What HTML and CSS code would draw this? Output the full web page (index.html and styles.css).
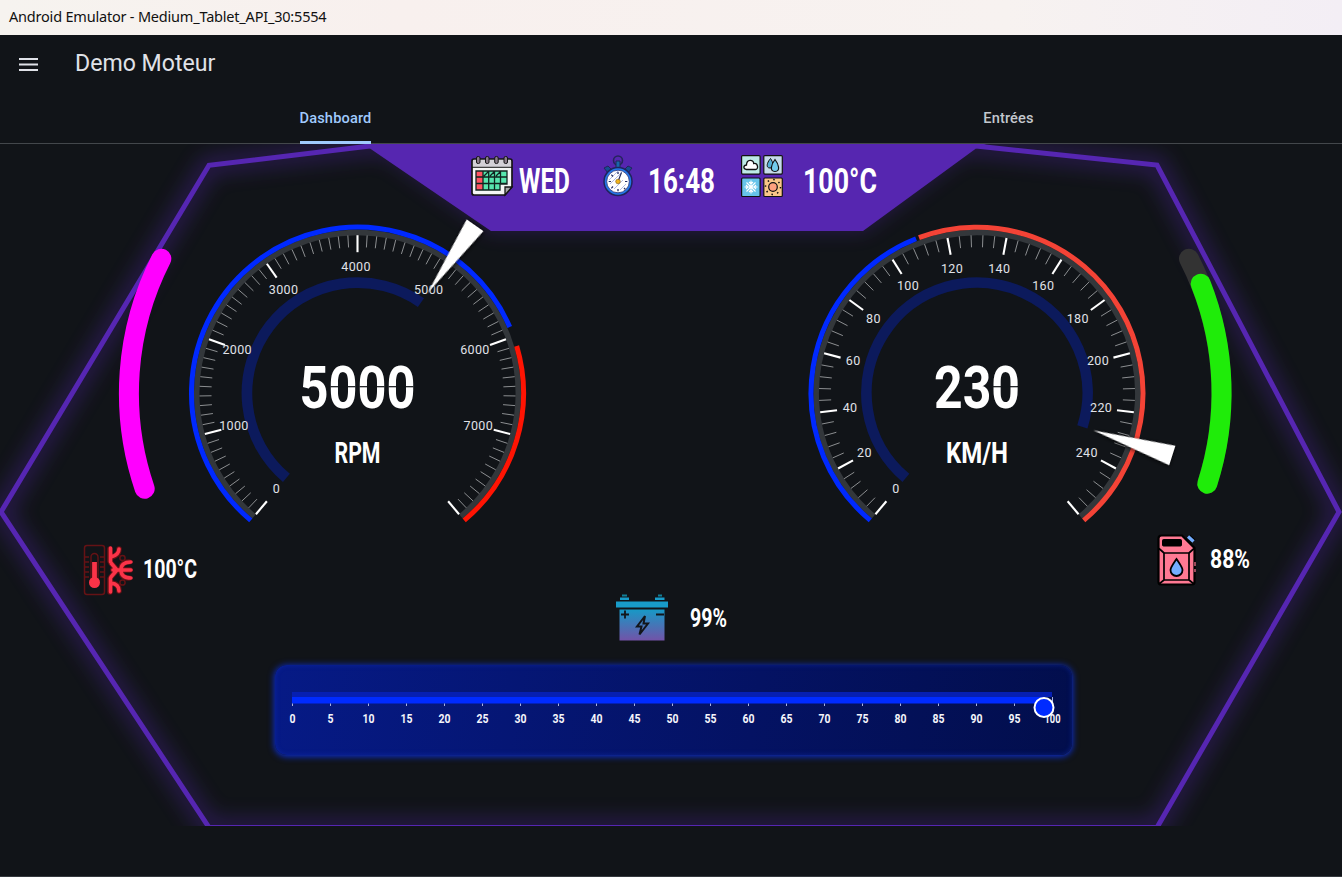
FILE: index.html
```html
<!DOCTYPE html>
<html lang="fr">
<head>
<meta charset="utf-8">
<title>Demo Moteur</title>
<link rel="stylesheet" href="styles.css">
</head>
<body>
<header class="titlebar"><span>Android Emulator - Medium_Tablet_API_30:5554</span></header>
<div class="appbar">
  <svg class="menu" width="19" height="14" viewBox="0 0 19 14"><path d="M0 1h19M0 6.500h19M0 12h19"/></svg>
  <h1>Demo Moteur</h1>
</div>
<nav class="tabs">
  <div class="tab active"><span>Dashboard</span></div>
  <div class="tab entries"><span>Entrées</span></div>
</nav>
<main class="dash">
  <svg class="frame" width="1342" height="682" viewBox="0 144 1342 682">
    <defs><filter id="glow" x="-10%" y="-10%" width="120%" height="120%"><feGaussianBlur stdDeviation="10"/></filter></defs>
    <g filter="url(#glow)" opacity=".34">
      <path class="outline wide" d="M209 165L370 146.500H975L1157 165L1339 512L1157 827.500H209L1 512Z"/>
      <path class="banner" d="M368 144H980L863 231H491Z"/>
    </g>
    <path class="outline" d="M370 146L209 165.300L1 512L209 827.500H1157L1339 512L1157 165L976 146"/>
    <path class="banner" d="M364 144H986L976 148.500L863 231H491L368.500 147.500Z"/>
  </svg>

  <section class="readouts">
    <div class="readout date">
      <svg width="42" height="40" viewBox="0 0 42 40">
        <path d="M1 5Q1 3 3 3H39Q41 3 41 5V31L34 39H3Q1 39 1 37Z" fill="#f5f5f5" stroke="#151515" stroke-width="1.700"/>
        <path d="M2 4H40V11H2Z" fill="#d3d0d6"/><path d="M1 11.300H41" stroke="#151515" stroke-width="1"/>
        <path d="M5 15H36V28H29V34H5Z" fill="#57e6ae"/><path d="M5 15H12V34H5Z" fill="#ff5362"/>
        <path d="M5 15H36V28H29V34H5ZM12 15V34M17.700 15V34M23.500 15V34M29.500 15V28M5 21H36M5 27.500H36M13 20l4-4M19 20l4-4M25 20l4-4" fill="none" stroke="#10241f" stroke-width="1.300"/>
        <path d="M34 39V31H41Z" fill="#aaa" stroke="#151515" stroke-width="1.300"/>
        <g fill="#8b7d89" stroke="#151515" stroke-width="1"><rect x="5.500" y=".5" width="3.500" height="7" rx="1.500"/><rect x="14.500" y=".5" width="3.500" height="7" rx="1.500"/><rect x="23.700" y=".5" width="3.500" height="7" rx="1.500"/><rect x="33" y=".5" width="3.500" height="7" rx="1.500"/></g>
      </svg>
      <svg class="digits" width="51" height="26"><text x="0" y="25.300" textLength="51">WED</text></svg>
    </div>
    <div class="readout clock">
      <svg width="30" height="42" viewBox="0 0 30 42">
        <circle cx="15" cy="5.500" r="4.500" fill="none" stroke="#25245c" stroke-width="1.600"/>
        <path d="M13 6h4v7h-4Z" fill="#1867ab" stroke="#202657"/>
        <path d="M1 13l4-2 4 4-4 3ZM29 13l-4-2-4 4 4 3Z" fill="#164c91" stroke="#24245c"/>
        <circle cx="15" cy="26.500" r="14" fill="#2377e8" stroke="#20245d" stroke-width="1.500"/>
        <circle cx="15" cy="26.500" r="11.300" fill="#fff" stroke="#2a347a" stroke-width=".8"/>
        <path d="M6 25l9-9M7 29L19 17M11 34l9-9M17 35l6-6M15 16v3M15 34v3M5 26.500h3M22 26.500h3M8 19l2 2M8 34l2-2M21 33l2 2" stroke="#a6b3e2" stroke-width=".9"/>
        <path d="M15 17v2M15 34v2M6 26.500h2M22 26.500h2M8.500 20l1.500 1.500M21 33l1.500 1.500M8.500 33l1.500-1.500M15 26.500L18.500 17.500" stroke="#28305e" stroke-width="1.200"/>
        <circle cx="15" cy="26.500" r="2.300" fill="#efb41e" stroke="#815b10" stroke-width=".6"/>
      </svg>
      <svg class="digits" width="66" height="26"><text x="-1" y="25.300" textLength="67">16:48</text></svg>
    </div>
    <div class="readout weather">
      <svg width="42" height="42" viewBox="0 0 42 42">
        <g stroke="#111" stroke-width="1.200"><rect x=".6" y=".6" width="18.500" height="18.500" rx="1" fill="#bdebe6"/><rect x="22.800" y=".6" width="18.500" height="18.500" rx="1" fill="#c6dbea"/><rect x=".6" y="23" width="18.500" height="18.500" rx="1" fill="#67c4ea"/><rect x="22.800" y="23" width="18.500" height="18.500" rx="1" fill="#fac789"/></g>
        <path d="M5.500 14.500C2 14.500 2 10.300 5.500 10C5.500 4 12.500 4 12.700 8.500C17.500 8 17.500 14.500 14.500 14.500Z" fill="#fff" stroke="#111" stroke-width="1.300"/>
        <path d="M29.500 3.500C26 7.500 24.500 13 29 13C34 13 32 7 29.500 3.500Z" fill="#54afd7" stroke="#111"/><path d="M34 4.500C30.500 9 28 16.500 34 16.500C40 16.500 37.500 9 34 4.500Z" fill="#72cbed" stroke="#111" stroke-width="1.200"/>
        <path d="M10 25.500v13M3.500 32h13M5.500 27.500l9 9M14.500 27.500l-9 9M8 27l2 2 2-2M8 37l2-2 2 2M5 30l2 2-2 2M15 30l-2 2 2 2" fill="none" stroke="#fff" stroke-width="1.100"/>
        <circle cx="32" cy="32" r="4.300" fill="#ffa17f" stroke="#111" stroke-width="1.200"/><circle cx="32" cy="32" r="7.500" fill="none" stroke="#111" stroke-width="1.500" stroke-dasharray="1.500 4.390"/>
      </svg>
      <svg class="digits" width="73" height="26"><text x="-2" y="25.300" textLength="74">100°C</text></svg>
    </div>
  </section>

  <section class="gauges">
    <svg class="level temp" width="189" height="314" viewBox="0 216 189 314"><path d="M161.300 258.700A296 296 0 0 0 144.700 488.700"/></svg>
    <svg class="gauge" id="rpm" width="337" height="314" viewBox="-168.500 -177.200 337 314"></svg>
    <div></div>
    <svg class="gauge" id="speed" width="337" height="314" viewBox="-168 -177.200 337 314"></svg>
    <svg class="level fuel" width="196" height="314" viewBox="1146 216 196 314"><path class="rest" d="M1189 258.700A296 296 0 0 1 1207.300 483.700"/><path d="M1200.700 283.700A296 296 0 0 1 1207.300 483.700"/></svg>
  </section>

  <section class="status">
    <div class="item thermo">
      <svg width="51" height="52" viewBox="0 0 51 52">
        <rect x="1.500" y="1.500" width="20" height="49" rx="2.500" fill="none" stroke="#651215" stroke-width="1.500"/>
        <path d="M8 36V13a3.500 3.500 0 0 1 7 0V36M2 13h4M2 18h4M2 23h4M2 28h4M2 33h4M17 13h4M17 18h4M17 23h4M17 28h4M17 33h4" fill="none" stroke="#651215" stroke-width="1.400"/>
        <path d="M11.500 18V38" stroke="#fb3348" stroke-width="4.800"/><circle cx="11.500" cy="38.500" r="5.500" fill="#fb3348"/>
        <g fill="none" stroke="#651215" stroke-width="5.500" stroke-linecap="round"><path d="M27 5V17M27 35V48M30 26h17M36 5q0 6-7 8M36 47q0-7-7-8M46 18q-8 0-8 8M46 34q-8 0-8-8M28 19l6 7-6 7"/></g>
        <g fill="none" stroke="#fb3348" stroke-width="3.600" stroke-linecap="round"><path d="M27.500 4V18M27.500 34V48M30 26h18M36 5q0 6-8 8M36 47q0-7-8-8M48 18q-10 0-10 8M48 34q-10 0-10-8M28 19l6 7-6 7"/></g>
        <g fill="none" stroke="#651215" stroke-width="1.500"><circle cx="39.500" cy="14" r="2.600"/><circle cx="39.500" cy="38.500" r="2.600"/></g>
      </svg>
      <svg class="digits small" width="54" height="20"><text x="-2" y="18.800" textLength="54">100°C</text></svg>
    </div>
    <div class="item battery">
      <svg width="52" height="48" viewBox="0 0 52 48">
        <defs><linearGradient id="bat" x1="0" y1="0" x2="0" y2="1"><stop offset="0" stop-color="#1799c6"/><stop offset="1" stop-color="#7253a8"/></linearGradient></defs>
        <path d="M6 .5h5v2H6ZM42 .5h4v2h-4Z" fill="#117f98"/><path d="M4 3.500h9v2.500H4ZM39 3.500h9.500v2.500H39ZM0 7.500h52v6H0Z" fill="#189cc9"/>
        <path d="M3.500 15.500h45V46.500h-45Z" fill="url(#bat)"/>
        <path d="M5 20.500h8M9 16.500v8M40 20.500h8" stroke="#12151a" stroke-width="1.800"/>
        <path d="M29 22L21 32.500H25.500L23.500 40.500L32 29.500H27.500Z" fill="none" stroke="#12151a" stroke-width="2"/>
      </svg>
      <svg class="digits small" width="38" height="20"><text x="0" y="18.500" textLength="37">99%</text></svg>
    </div>
    <div class="item can">
      <svg width="40" height="52" viewBox="0 0 40 52">
        <path d="M1.500 4.500Q1.500 1.500 4.500 1.500H25L37.500 14V48Q37.500 50.500 35 50.500H4Q1.500 50.500 1.500 48Z" fill="#ff7993" stroke="#000" stroke-width="2.200"/>
        <path d="M7 19H32V46H7ZM2 14.500L7 19M37 14.500L32 19M2 50l5-4M32 46l5 4" fill="none" stroke="#000" stroke-width="1.700"/>
        <rect x="5.500" y="5.500" width="19" height="6.500" rx="1" stroke="#000"/><path d="M38 28v4M38 35v3" stroke="#ff7993" stroke-width="1.200"/>
        <path d="M31 2.500l5.500 5" stroke="#000" stroke-width="5.500"/><path d="M31 2.500l5.500 5" stroke="#73adff" stroke-width="3.300"/>
        <path d="M19.500 25C15.500 31 13.500 33.500 13.500 36a6 6 0 0 0 12 0C25.500 33.500 23.500 31 19.500 25Z" fill="#73adff" stroke="#000" stroke-width="1.800"/>
      </svg>
      <svg class="digits small" width="40" height="20"><text x="-1" y="19.200" textLength="40">88%</text></svg>
    </div>
  </section>

  <section class="panel"><svg id="scale" width="797" height="90" viewBox="275 665 797 90"></svg></section>
</main>
<footer class="edge"></footer>
<script src="gauges.js"></script>
</body>
</html>
```
FILE: styles.css
```css
* { box-sizing: border-box; }
body { margin: 0; width: 1342px; height: 877px; overflow: hidden; display: flex; flex-direction: column; background: #111418; font-family: Roboto, sans-serif; }
svg { display: block; overflow: visible; flex: none; }
.titlebar { height: 35px; flex: none; padding: 0 9px 3px; display: flex; align-items: center; background: linear-gradient(90deg, #f6f3ef, #f8f0ee 30%, #f7f2f0 75%, #f3eef5); color: #111; font: 14.5px/32px "Noto Sans", sans-serif; white-space: nowrap; }
.titlebar span { letter-spacing: -.2px; }
.appbar { height: 58px; flex: none; display: flex; align-items: center; padding-left: 19px; gap: 37px; }
.menu { stroke: #e0e2e8; stroke-width: 2; margin-top: 1px; }
h1 { margin: 0; font-size: 23.1px; font-weight: 400; color: #e0e2e8; line-height: 58px; }
.tabs { height: 51px; flex: none; display: grid; grid-template-columns: 1fr 1fr; border-bottom: 1px solid #43474b; }
.tab { display: flex; justify-content: center; color: #c3c7cd; font-size: 14.6px; font-weight: 500; line-height: 50px; letter-spacing: .15px; }
.active { color: #a0cafd; }
.active span { height: 51px; background: linear-gradient(#a0cafd, #a0cafd) bottom / 100% 3px no-repeat; }
.entries { padding-left: 4px; }
.dash { height: 682px; flex: none; position: relative; overflow: hidden; }
.frame { position: absolute; inset: 0; z-index: -1; }
.outline { fill: none; stroke: #5626b2; stroke-width: 5; }
.wide { stroke-width: 18; }
.banner { fill: #5626b0; }
.readouts { height: 72px; display: flex; padding: 11px 0 0 471px; }
.readout { display: flex; align-items: flex-start; }
.date { gap: 6px; padding-top: 1px; }
.clock .digits, .weather .digits { margin-top: 13px; }
.date .digits { margin-top: 12px; }
.clock { margin-left: 33px; gap: 16px; }
.weather { margin-left: 26px; gap: 22px; }
.digits text { font: 700 35.5px Roboto, sans-serif; fill: #fff; }
.digits.small text { font-size: 26px; }
.gauges { height: 314px; display: grid; grid-template-columns: 189px 337px 283px 337px 196px; }
.level path { fill: none; stroke-width: 20; stroke-linecap: round; }
.temp path { stroke: #ff00ff; }
.fuel path { stroke: #1fec09; }
.fuel .rest { stroke: #333; }
.band { fill: none; stroke-width: 5; }
.track { fill: none; stroke: #33373b; stroke-width: 5.5; }
.inner { fill: none; stroke: #0c1a5c; stroke-width: 10.7; }
.major { stroke: #fff; stroke-width: 2.1; }
.minor { stroke: #9a9c9e; stroke-width: .9; }
.mark { font: 12.5px Roboto, sans-serif; letter-spacing: .35px; fill: #e0e2e8; text-anchor: middle; }
.value { font: 700 59px Roboto, sans-serif; fill: #fff; }
.unit { font: 700 30px Roboto, sans-serif; fill: #fff; }
.notch { stroke: #111418; stroke-width: 1.2; }
.needle { fill: #fff; filter: drop-shadow(0 1px 2px rgba(0, 0, 0, .8)); }
.status { height: 120px; display: grid; grid-template-columns: 616px 541px 185px; }
.item { display: flex; align-items: flex-start; }
.thermo { padding: 14px 0 0 83px; gap: 11px; }
.thermo .digits { margin-top: 15px; }
.battery { padding-top: 64px; gap: 22px; }
.battery .digits { margin-top: 14px; }
.can { padding-top: 4px; gap: 14px; }
.can .digits { margin-top: 15px; }
.panel { width: 797px; height: 90px; margin: 15px 0 0 275px; border-radius: 12px; background: linear-gradient(100deg, #061a86, #041263 60%, #020e4c); box-shadow: 0 1px 6px 1px #0c2cc4, inset 0 0 5px rgba(20, 50, 190, .45); }
.tick { fill: #a9b2df; }
.num { font: 700 12.5px Roboto, sans-serif; fill: #f5f5fb; text-anchor: middle; }
.edge { margin-top: auto; height: 1px; flex: none; background: #35393e; }
```
FILE: gauges.js
```js
const point = (r, deg) => {
  const a = deg * Math.PI / 180;
  return [(r * Math.cos(a)).toFixed(2), (r * Math.sin(a)).toFixed(2)];
};
const arc = (r, from, to) =>
  `M${point(r, from)}A${r} ${r} 0 ${to - from > 180 ? 1 : 0} 1 ${point(r, to)}`;

function gauge(id, o) {
  const deg = v => 130 + 280 * v / o.max;
  let s = `<path class="track" d="${arc(160.8, 130, 410)}"/>`;
  for (const [a, b, color] of o.ranges)
    s += `<path class="band" stroke="${color}" d="${arc(166, deg(a), deg(b))}"/>`;
  s += `<path class="inner" d="${arc(110.6, 130, deg(o.value))}"/>`;
  const count = o.max / o.step * o.minor;
  for (let i = 0; i <= count; i++) {
    const major = i % o.minor === 0, a = 130 + 280 * i / count;
    s += `<path class="${major ? 'major' : 'minor'}" d="M${point(158, a)}L${point(major ? 141 : 146, a)}"/>`;
  }
  for (let v = 0; v < o.max; v += o.step) {
    const [x, y] = point(v ? 126.5 : 125.5, deg(v));
    s += `<text class="mark" x="${x - (v ? 1.4 : .4)}" y="${+y + 4}">${v}</text>`;
  }
  s += `<text class="value" x="${-o.width / 2}" y="14.500" textLength="${o.width}" lengthAdjust="spacingAndGlyphs">${o.value}</text>`;
  for (const x of o.notches) s += `<path class="notch" d="M${x} -6.500h25"/>`;
  s += `<text class="unit" x="${-o.unitWidth / 2}" y="70" textLength="${o.unitWidth}" lengthAdjust="spacingAndGlyphs">${o.unit}</text>`;
  s += `<path class="needle" transform="rotate(${deg(o.value)})" d="M122 0L205 -10.300V10.300Z"/>`;
  document.getElementById(id).innerHTML = s;
}

gauge('rpm', { max: 8000, step: 1000, minor: 10, value: 5000, unit: 'RPM', width: 116, unitWidth: 46,
  notches: [-27, 2, 31], ranges: [[0, 5900, '#0029ff'], [6100, 8000, '#ff1403']] });
gauge('speed', { max: 260, step: 20, minor: 5, value: 230, unit: 'KM/H', width: 86, unitWidth: 62,
  notches: [16], ranges: [[0, 110, '#0029ff'], [111, 260, '#f44336']] });

document.querySelectorAll('.digits text').forEach(t => t.setAttribute('lengthAdjust', 'spacingAndGlyphs'));

let scale = '<rect x="292" y="692" width="760" height="5" fill="#061fb2"/><rect x="292" y="697" width="752" height="6.500" fill="#002bff"/>';
for (let v = 0; v <= 100; v += 5) {
  const x = 292.5 + v * 7.6;
  scale += `<rect class="tick" x="${x - .5}" y="${v === 100 ? 697 : 703.5}" width="1" height="${v === 100 ? 6 : 2.5}"/>`;
  scale += `<text class="num" x="${x}" y="722.500" textLength="${[6, 12, 16][String(v).length - 1]}" lengthAdjust="spacingAndGlyphs">${v}</text>`;
}
scale += '<circle cx="1044" cy="707.500" r="9.500" fill="#002bff" stroke="#fff" stroke-width="2"/>';
document.getElementById('scale').innerHTML = scale;
```
